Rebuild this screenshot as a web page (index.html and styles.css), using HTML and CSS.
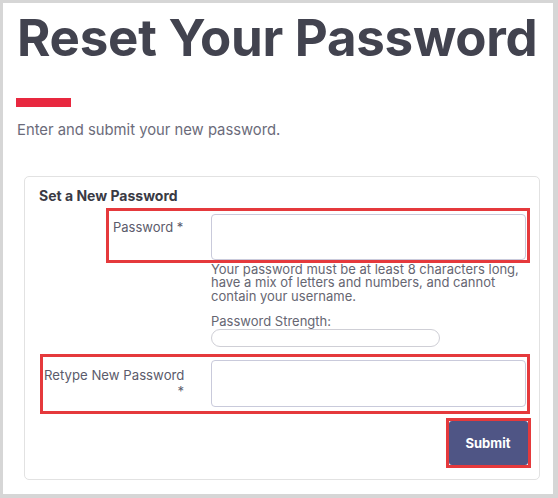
FILE: index.html
```html
<!DOCTYPE html>
<html>
<head>
<meta charset="utf-8">
<link rel="stylesheet" href="styles.css">
</head>
<body>
<div class="page">
  <h1 class="title">Reset Your Password</h1>
  <div class="accent"></div>
  <p class="lead">Enter and submit your new password.</p>
  <div class="card">
    <h2 class="card-title">Set a New Password</h2>
    <div class="row row-pass hl">
      <label class="label">Password *</label>
      <div class="input"></div>
    </div>
    <div class="help-block">
      <p class="help">Your password must be at least 8 characters long, have a mix of letters and numbers, and cannot contain your username.</p>
      <p class="strength-label">Password Strength:</p>
      <div class="strength"></div>
    </div>
    <div class="row row-retype hl">
      <label class="label">Retype New Password<br><span class="star">*</span></label>
      <div class="input"></div>
    </div>
    <div class="actions">
      <div class="hl btn-wrap"><button class="btn">Submit</button></div>
    </div>
  </div>
</div>
</body>
</html>
```
FILE: styles.css
```css
* { box-sizing: border-box; }
html, body { margin: 0; padding: 0; }
body {
  background: #d6d6d6;
  font-family: Inter, "Noto Sans", sans-serif;
  width: 558px;
  height: 498px;
  overflow: hidden;
}
.page {
  margin: 3px 5px 0 3px;
  height: 491px;
  background: #fff;
  padding: 9px 0 0 14px;
}
.title {
  margin: 0;
  font-size: 51px;
  line-height: 52px;
  font-weight: 700;
  color: #42434f;
  letter-spacing: -0.25px;
}
.accent {
  width: 55px;
  height: 9px;
  background: #e8283f;
  margin: 34px 0 0 -1px;
}
.lead {
  margin: 13px 0 0 0;
  font-size: 14.8px;
  line-height: 20px;
  color: #6b6b7a;
}
.card {
  margin: 36px 0 0 7px;
  width: 516px;
  height: 304px;
  border: 1.5px solid #e2e2e2;
  border-radius: 5px;
  padding: 9.5px 8.5px 0 14px;
}
.card-title {
  margin: 0;
  font-size: 14px;
  line-height: 18px;
  font-weight: 700;
  color: #3a3a44;
}
.hl { border: 3px solid #e5393c; }
.row {
  display: grid;
  align-items: start;
}
.row-pass {
  margin: 3px 0 0 67px;
  width: 424px;
  height: 55px;
  grid-template-columns: 102px 1fr;
  padding: 3px 1px 0 0;
}
.row-retype {
  margin: 7px 0 0 1px;
  width: 490px;
  height: 60px;
  grid-template-columns: 168px 1fr;
  padding: 3px 1px 0 0;
}
.label {
  font-size: 13px;
  line-height: 16px;
  color: #5b5b6b;
  padding: 5.5px 0 0 4px;
}
.row-retype .label { padding: 6.5px 0 0 1px; font-size: 13.2px; }
.star { display: block; text-align: right; padding-right: 27px; }
.input {
  height: 46px;
  border: 1px solid #c9cadb;
  border-radius: 4px;
  background: #fff;
}
.row-retype .input { height: 47px; }
.help-block {
  margin: 0 0 0 172px;
}
.help {
  margin: 0;
  width: 320px;
  font-size: 13px;
  line-height: 13.5px;
  color: #666672;
}
.strength-label {
  margin: 10px 0 0 0;
  font-size: 13px;
  line-height: 16px;
  color: #666672;
}
.strength {
  width: 229px;
  height: 18px;
  border: 1px solid #cfcfd6;
  border-radius: 9px;
}
.actions {
  display: flex;
  justify-content: flex-end;
  margin-top: 4px;
}
.btn-wrap { width: 85px; height: 50px; }
.btn {
  width: 100%;
  height: 100%;
  border: none;
  border-radius: 3px;
  background: #4f5585;
  color: #fff;
  font-family: Inter, "Noto Sans", sans-serif;
  font-weight: 700;
  font-size: 13px;
}
```
